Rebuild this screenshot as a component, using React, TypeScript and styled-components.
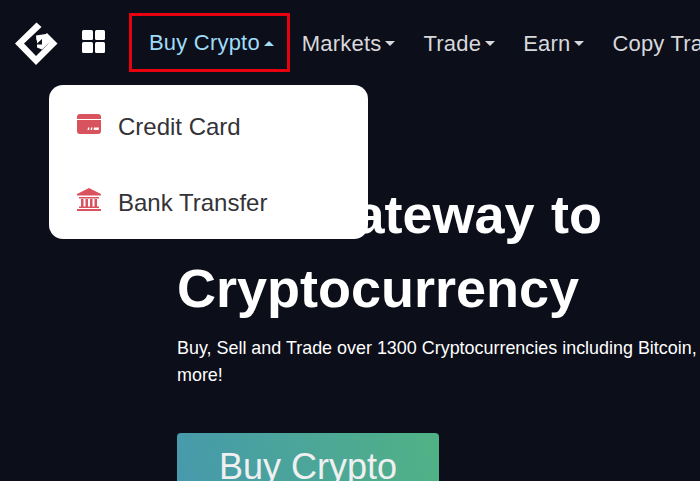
import React from "react";
import styled, { createGlobalStyle } from "styled-components";

const Global = createGlobalStyle`
  html, body { margin: 0; padding: 0; background: #0c0e1a; }
  body { font-family: "Liberation Sans", sans-serif; }
`;

const Page = styled.div`
  position: relative;
  width: 700px;
  height: 481px;
  overflow: hidden;
  background: #0c0e1a;
`;

const Header = styled.header`
  display: flex;
  align-items: center;
  width: 900px;
  height: 72px;
  padding: 13px 0 0 15px;
  box-sizing: border-box;
  white-space: nowrap;
`;

const LogoMark = styled.svg`
  flex: none;
  width: 44px;
  height: 44px;
`;

const Grid = styled.div`
  flex: none;
  display: grid;
  grid-template-columns: 10.5px 10.5px;
  grid-template-rows: 10.5px 10.5px;
  gap: 2px;
  margin: 0 24px 3px 23px;
`;

const Dot = styled.span`
  background: #fff;
  border-radius: 1.5px;
`;

const Nav = styled.nav`
  flex: none;
  display: flex;
  align-items: center;
`;

const NavItem = styled.a<{ $active?: boolean }>`
  display: flex;
  align-items: center;
  gap: 4px;
  height: 59px;
  box-sizing: border-box;
  margin-right: ${(p) => (p.$active ? "12px" : "28px")};
  padding: ${(p) => (p.$active ? "1px 13px 0 17px" : "2px 0 0")};
  border: ${(p) => (p.$active ? "3px solid #e8000f" : "0")};
  color: ${(p) => (p.$active ? "#9fdcf7" : "#d8d8dc")};
  font-size: 22px;
  letter-spacing: 0.2px;
`;

const Caret = styled.span<{ $up?: boolean }>`
  width: 0;
  height: 0;
  border-left: 5.5px solid transparent;
  border-right: 5.5px solid transparent;
  ${(p) =>
    p.$up
      ? "border-bottom: 5px solid #9fdcf7;"
      : "border-top: 5px solid #d8d8dc;"}
`;

const Menu = styled.div`
  position: absolute;
  left: 49px;
  top: 85px;
  width: 319px;
  height: 154px;
  background: #fff;
  border-radius: 14px;
  display: flex;
  flex-direction: column;
  gap: 28px;
  padding: 18px 0 0 28px;
  box-sizing: border-box;
  z-index: 2;
`;

const MenuItem = styled.div`
  display: flex;
  align-items: center;
  gap: 17px;
  height: 48px;
  color: #333338;
  font-size: 24px;
`;

const MenuIcon = styled.span`
  display: block;
  width: 24px;
  line-height: 0;
  margin-bottom: 7px;
`;

const Hero = styled.section`
  padding: 105px 0 0 177px;
  width: 900px;
`;

const Title = styled.h1`
  margin: 0;
  color: #fff;
  font-weight: 700;
  font-size: 54px;
  line-height: 74px;
  word-spacing: 1.5px;
`;

const Sub = styled.p`
  margin: 10px 0 0;
  color: #fff;
  font-size: 17.93px;
  line-height: 27px;
`;

const BuyButton = styled.button`
  display: block;
  margin-top: 44px;
  width: 262px;
  height: 70px;
  border: 0;
  border-radius: 4px;
  background: linear-gradient(75deg, #4699ad, #51b285);
  color: #f0f0f0;
  font-size: 36px;
  font-family: "Liberation Sans", sans-serif;
  padding: 0 0 3px;
`;

const Logo = () => (
  <LogoMark viewBox="15 20.5 44 44">
    <path
      d="M36.500 22 L15 43 L36 64.500 L57.500 43 L47 32.500 L42.500 37 L48.500 43 L36 55.500 L24 43 L41.500 26.500 Z"
      fill="#fff"
    />
    <path d="M36 35 L46 33.500 L50 41.500 L42 49 L37 47 Z" fill="#fff" />
    <path d="M30 46 L37 39.500 L37 43 L42 38.500 L42 44 L37 44 L37 50 Z" fill="#0c0e1a" />
  </LogoMark>
);

const CardIcon = () => (
  <svg width="24" height="20" viewBox="0 0 24 20">
    <path d="M0 3a3 3 0 0 1 3-3h18a3 3 0 0 1 3 3v2H0z" fill="#d9535f" />
    <path
      d="M0 6h24v11a3 3 0 0 1-3 3H3a3 3 0 0 1-3-3z M11 13.500l-.5 2.500h1.500l.5-2.500z M14 13.500l-.5 2.500h1.500l.5-2.500z M17 13.500l-.5 2.500h5l.5-2.500z"
      fill="#d9535f"
      fillRule="evenodd"
    />
  </svg>
);

const BankIcon = () => (
  <svg width="24" height="23" viewBox="0 0 24 23">
    <path
      d="M12 0L24 6v1.500H0V6z M2 9h20v1.500H2z M4 11h2.500v7.500H4z M8.500 11H11v7.500H8.500z M13 11h2.500v7.500H13z M17.500 11H20v7.500h-2.500z M2 18.500h20V20H2z M0 21h24v2H0z"
      fill="#d9535f"
    />
  </svg>
);

export default function App() {
  return (
    <Page>
      <Global />
      <Header>
        <Logo />
        <Grid>
          <Dot />
          <Dot />
          <Dot />
          <Dot />
        </Grid>
        <Nav>
          <NavItem $active>
            Buy Crypto
            <Caret $up />
          </NavItem>
          <NavItem>
            Markets
            <Caret />
          </NavItem>
          <NavItem>
            Trade
            <Caret />
          </NavItem>
          <NavItem>
            Earn
            <Caret />
          </NavItem>
          <NavItem>Copy Trade</NavItem>
        </Nav>
      </Header>
      <Menu>
        <MenuItem>
          <MenuIcon>
            <CardIcon />
          </MenuIcon>
          Credit Card
        </MenuItem>
        <MenuItem>
          <MenuIcon>
            <BankIcon />
          </MenuIcon>
          Bank Transfer
        </MenuItem>
      </Menu>
      <Hero>
        <Title>
          Your Gateway to
          <br />
          Cryptocurrency
        </Title>
        <Sub>
          Buy, Sell and Trade over 1300 Cryptocurrencies including Bitcoin, Ethereum and
          <br />
          more!
        </Sub>
        <BuyButton>Buy Crypto</BuyButton>
      </Hero>
    </Page>
  );
}
